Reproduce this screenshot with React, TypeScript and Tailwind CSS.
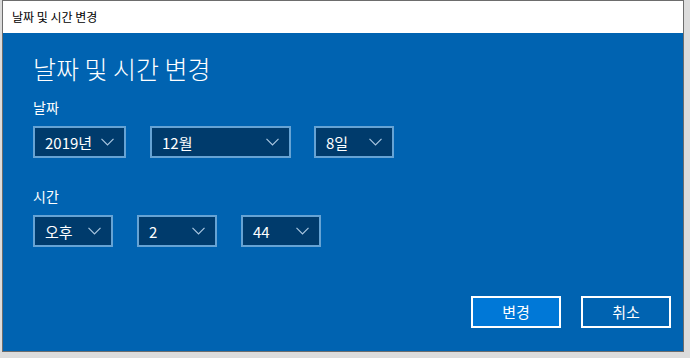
import type { ReactNode } from "react";

const font = { fontFamily: '"Noto Sans CJK KR", "Noto Sans", sans-serif' };

function Chevron() {
    return (
        <svg width="13" height="8" viewBox="0 0 13 8" fill="none" className="shrink-0">
            <path d="M0.5 0.8 L6.5 6.8 L12.5 0.8" stroke="#a9c6e0" strokeWidth="1.2" />
        </svg>
    );
}

function Picker({ width, value }: { width: string; value: ReactNode }) {
    return (
        <div
            className={`${width} h-[32px] flex items-center justify-between border-2 border-[#66a3d4] bg-[#003b6c] pl-[10px] pr-[10px] text-[15px] text-white`}
        >
            <span className="leading-none">{value}</span>
            <Chevron />
        </div>
    );
}

function App() {
    return (
        <div className="w-[690px] h-[358px] bg-[#dcdcdc] overflow-hidden" style={font}>
            <div className="ml-[2px] w-[682px] h-[352px] border border-[#6d6d6d] flex flex-col">
                <div className="h-[32px] bg-white flex items-center pl-[9px] text-[12px] text-black">
                    날짜 및 시간 변경
                </div>
                <div className="flex-1 bg-[#0063b1] text-white pl-[30px] flex flex-col">
                    <h1 className="mt-[17px] text-[25px] font-light leading-[36px]">날짜 및 시간 변경</h1>
                    <div className="mt-[12px] text-[14px] leading-[18px]">날짜</div>
                    <div className="mt-[10px] flex">
                        <Picker width="w-[93px]" value="2019년" />
                        <div className="w-[24px]" />
                        <Picker width="w-[141px]" value="12월" />
                        <div className="w-[23px]" />
                        <Picker width="w-[80px]" value="8일" />
                    </div>
                    <div className="mt-[29px] text-[14px] leading-[18px]">시간</div>
                    <div className="mt-[10px] flex gap-[24px]">
                        <Picker width="w-[80px]" value="오후" />
                        <Picker width="w-[80px]" value="2" />
                        <Picker width="w-[80px]" value="44" />
                    </div>
                    <div className="mt-[49px] flex justify-end gap-[20px] pr-[12px]">
                        <button className="w-[90px] h-[32px] border-2 border-white bg-[#0078d7] text-[15px] text-white">
                            변경
                        </button>
                        <button className="w-[90px] h-[32px] border-2 border-white bg-[#0063b1] text-[15px] text-white">
                            취소
                        </button>
                    </div>
                </div>
            </div>
        </div>
    );
}

export default App;
